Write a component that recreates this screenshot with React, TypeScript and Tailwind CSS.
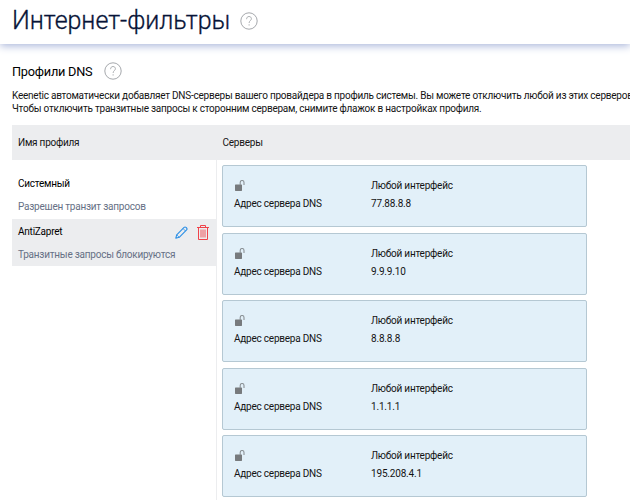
const servers = ['77.88.8.8', '9.9.9.10', '8.8.8.8', '1.1.1.1', '195.208.4.1'];

function Help() {
  return (
    <svg className="h-[18px] w-[18px] shrink-0" viewBox="0 0 18 18" fill="none" stroke="#a5a8ac">
      <circle cx="9" cy="9" r="8.2" strokeWidth="1" />
      <path d="M6.600 7.200C6.600 5.500 7.500 4.500 9 4.500s2.400.9 2.400 2.300c0 1.800-2.300 1.900-2.300 4.200" strokeWidth="0.9" />
      <path d="M9.100 12.300v1.200" strokeWidth="1" />
    </svg>
  );
}

function OpenLock() {
  return (
    <svg className="block h-[12px] w-[11px]" viewBox="0 0 11 12">
      <rect x="1" y="4.400" width="7" height="6.500" rx="0.6" fill="#777a7d" />
      <path d="M6.200 4.900V2.400a1.900 1.900 0 0 1 3.800 0v2.500" fill="none" stroke="#8b9196" strokeWidth="1.100" />
    </svg>
  );
}

function Pencil() {
  return (
    <svg className="h-[13px] w-[13px]" viewBox="0 0 13 13" fill="none" stroke="#2b8fe6" strokeWidth="1.100" strokeLinejoin="round">
      <path d="M.8 12.200l.9-3.400 7.400-7.400c.6-.6 1.300-.6 1.900 0l.6.6c.6.6.6 1.300 0 1.900l-7.400 7.400z" />
      <path d="M1.700 8.800l2.500 2.500M8 2.500L10.500 5" strokeWidth="0.8" />
    </svg>
  );
}

function Trash() {
  return (
    <svg className="h-[15px] w-[12px]" viewBox="0 0 12 15" fill="none" stroke="#f0434a" strokeWidth="1">
      <path d="M0 2.500h12M3.500 2.500V.5h5v2M1.500 2.500v12h9v-12" />
      <path d="M4 4.500v8M6 4.500v8M8 4.500v8" strokeWidth="0.9" />
    </svg>
  );
}

export default function App() {
  return (
    <div className="h-[500px] w-[630px] overflow-hidden bg-white font-['Roboto',sans-serif] text-[10px] leading-[12.500px] tracking-[-0.23px] text-[#141414]">
      <header className="flex h-[44px] items-center gap-[10.500px] pb-[3px] pl-[12px] shadow-[0_2px_8px_0px_#aab6da]">
        <h1 className="w-[217px] text-[25px] leading-[30px] font-light tracking-[-0.03px] whitespace-nowrap text-[#071438] [-webkit-text-stroke:0.3px_#071438]">Интернет-фильтры</h1>
        <Help />
      </header>
      <main className="pl-[12px]">
        <div className="flex h-[46px] items-center gap-[12px] pt-[8px]">
          <h2 className="w-[80px] pt-px text-[12.750px] leading-[16px] tracking-[-0.25px] whitespace-nowrap text-black">Профили DNS</h2>
          <Help />
        </div>
        <p className="h-[35px] whitespace-nowrap">
          Keenetic автоматически добавляет DNS-серверы вашего провайдера в профиль системы. Вы можете отключить любой из этих серверов
          <br />
          Чтобы отключить транзитные запросы к сторонним серверам, снимите флажок в настройках профиля.
        </p>
        <div className="flex h-[35px] items-center bg-[#ecedef] pt-px">
          <span className="w-[210.500px] pl-[6px]">Имя профиля</span>
          <span>Серверы</span>
        </div>
        <div className="flex h-[340px]">
          <aside className="w-[205px] shrink-0 border-r border-[#ecedef]">
            <div className="h-[59px] pt-[18px] pl-[6px]">
              <div className="text-black">Системный</div>
              <div className="mt-[10px] text-[#667085]">Разрешен транзит запросов</div>
            </div>
            <div className="h-[47px] bg-[#ecedef] pt-[6.500px] pl-[6px]">
              <div className="flex h-[13px] items-center text-black">
                <span className="w-[157px]">AntiZapret</span>
                <Pencil />
                <span className="ml-[9px]"><Trash /></span>
              </div>
              <div className="mt-[10px] whitespace-nowrap text-[#667085]">Транзитные запросы блокируются</div>
            </div>
          </aside>
          <div className="flex flex-col gap-[5.600px] pt-[5px] pl-[5px]">
            {servers.map((ip) => (
              <section key={ip} className="h-[62px] w-[365px] shrink-0 rounded-[2px] border border-[#b5c8d3] bg-[#e2f0f9] pt-[14px] pl-[11px]">
                <div className="grid grid-cols-[137px_1fr] gap-y-[5.500px]">
                  <div><OpenLock /></div>
                  <div>Любой интерфейс</div>
                  <div>Адрес сервера DNS</div>
                  <div className="tracking-[-0.18px]">{ip}</div>
                </div>
              </section>
            ))}
          </div>
        </div>
      </main>
    </div>
  );
}
